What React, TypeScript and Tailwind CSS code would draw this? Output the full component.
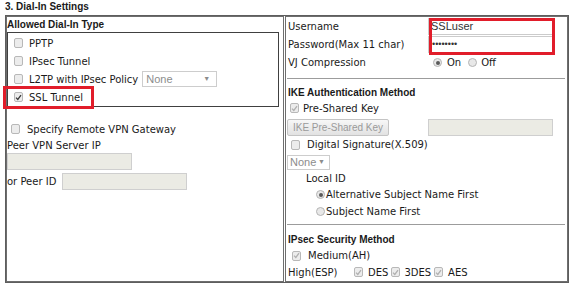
import React from 'react';

const arial = "font-['Liberation_Sans',Arial,sans-serif]";

function Box({ checked = false, dim = false }: { checked?: boolean; dim?: boolean }) {
  return (
    <span className='w-[9px] h-[10px] shrink-0 border border-[#b8b8b8] bg-[#ececec] rounded-[2px] inline-flex items-center justify-center'>
      {checked && (
        <svg width='7' height='7' viewBox='0 0 7 7'>
          <path d='M1 3.6 L2.8 5.4 L6 1.2' fill='none' stroke={dim ? '#b0b0b0' : '#3a3a3a'} strokeWidth='1.3' />
        </svg>
      )}
    </span>
  );
}

function Radio({ on = false }: { on?: boolean }) {
  return (
    <span className='w-[9px] h-[9px] shrink-0 rounded-full border border-[#b4b4b4] bg-[#e8e8e8] inline-flex items-center justify-center'>
      {on && <span className='w-[4px] h-[4px] rounded-full bg-[#5a5a5a]' />}
    </span>
  );
}

export default function App() {
  return (
    <div className="relative w-[573px] h-[286px] bg-white text-[10px] text-[#1a1a1a] font-['DejaVu_Sans',Verdana,sans-serif]">
      <div className={`h-[15px] pl-[5px] leading-[13px] font-bold ${arial}`}>3. Dial-In Settings</div>

      <div className='ml-[5px] w-[564px] h-[268px] border border-[#5e5e5e] flex gap-px'>
        {/* left cell */}
        <div className='w-[278px] border border-[#6e6e6e] flex flex-col'>
          <div className={`h-[15px] leading-[15px] font-bold ${arial}`}>Allowed Dial-In Type</div>
          <div className='mr-[4px] border border-[#404040] pt-px'>
            <div className='h-[18px] flex items-center pl-[6px]'><Box /><span className='ml-[6px]'>PPTP</span></div>
            <div className='h-[18px] flex items-center pl-[6px]'><Box /><span className='ml-[6px]'>IPsec Tunnel</span></div>
            <div className='h-[18px] flex items-center pl-[6px]'>
              <Box /><span className='ml-[6px]'>L2TP with IPsec Policy</span>
              <span className={`ml-[4px] w-[75px] h-[16px] border border-[#cdcdcd] flex items-center justify-between pl-[3px] pr-[6px] text-[11px] text-[#8c8c8c] ${arial}`}>
                None<span className='text-[7px]'>▼</span>
              </span>
            </div>
            <div className='h-[18px] flex items-center pl-[6px]'><Box checked /><span className='ml-[6px]'>SSL Tunnel</span></div>
          </div>

          <div className='mt-[14px] h-[16px] flex items-center pl-[4px]'><Box /><span className='ml-[7px]'>Specify Remote VPN Gateway</span></div>
          <div className='h-[16px] flex items-center'>Peer VPN Server IP</div>
          <div className='w-[125px] h-[17px] border border-[#cfcfcf] bg-[#ebebe4]' />
          <div className='mt-[3px] h-[17px] flex items-center'>
            <span className='w-[55px] shrink-0'>or Peer ID</span>
            <span className='w-[125px] h-[17px] border border-[#cfcfcf] bg-[#ebebe4]' />
          </div>
        </div>

        {/* right cell */}
        <div className='flex-1 border border-[#6e6e6e] flex flex-col'>
          <div className='h-[19px] flex items-center pl-[2px]'>
            <span className='w-[140px] shrink-0'>Username</span>
            <span className={`w-[125px] h-[17px] border border-[#cbcbcb] flex items-center pl-[2px] text-[11px] text-[#333] ${arial}`}>SSLuser</span>
          </div>
          <div className='h-[17px] flex items-center pl-[2px]'>
            <span className='w-[140px] shrink-0'>Password(Max 11 char)</span>
            <span className={`w-[125px] h-[17px] border border-[#cbcbcb] flex items-center pl-[3px] text-[9px] text-[#333] ${arial}`}>••••••••</span>
          </div>
          <div className='h-[19px] flex items-center pl-[2px]'>
            <span className='w-[145px] shrink-0'>VJ Compression</span>
            <Radio on /><span className='ml-[5px]'>On</span>
            <span className='ml-[7px]' /><Radio /><span className='ml-[4px]'>Off</span>
          </div>
          <div className='mt-[6px] h-px ml-px mr-[2px] bg-[#9c9c9c]' />
          <div className={`mt-[5px] h-[16px] flex items-center pl-[2px] font-bold ${arial}`}>IKE Authentication Method</div>
          <div className='h-[16px] flex items-center pl-[4px]'><Box checked dim /><span className='ml-[4px]'>Pre-Shared Key</span></div>
          <div className='mt-[3px] h-[17px] flex pl-px'>
            <span className={`w-[102px] h-[17px] border border-[#c4c4c4] rounded-[2px] bg-gradient-to-b from-[#f7f7f7] to-[#e2e2e2] flex items-center justify-center text-[#9a9a9a] ${arial}`}>IKE Pre-Shared Key</span>
            <span className='ml-[39px] w-[125px] h-[17px] border border-[#cfcfcf] bg-[#ebebe4]' />
          </div>
          <div className='h-[17px] flex items-center pl-[5px]'><Box /><span className='ml-[7px]'>Digital Signature(X.509)</span></div>
          <div className='mt-[2px] h-[15px] pl-px flex'>
            <span className={`w-[43px] h-[15px] border border-[#cdcdcd] flex items-center justify-between pl-[2px] pr-[4px] text-[11px] text-[#8c8c8c] ${arial}`}>
              None<span className='text-[7px]'>▼</span>
            </span>
          </div>
          <div className='h-[16px] flex items-center pl-[20px]'>Local ID</div>
          <div className='h-[17px] flex items-center pl-[30px]'><Radio on /><span className='ml-px'>Alternative Subject Name First</span></div>
          <div className='h-[16px] flex items-center pl-[30px]'><Radio /><span className='ml-px'>Subject Name First</span></div>
          <div className='mt-[5px] h-px ml-px mr-[2px] bg-[#9c9c9c]' />
          <div className={`mt-[6px] h-[16px] flex items-center pl-[2px] font-bold ${arial}`}>IPsec Security Method</div>
          <div className='h-[17px] flex items-center pl-[6px]'><Box checked dim /><span className='ml-[7px]'>Medium(AH)</span></div>
          <div className='h-[16px] flex items-center pl-[2px]'>
            <span className='w-[66px] shrink-0'>High(ESP)</span>
            <Box checked dim /><span className='ml-[5px]'>DES</span>
            <span className='ml-[3px]' /><Box checked dim /><span className='ml-[4px]'>3DES</span>
            <span className='ml-[3px]' /><Box checked dim /><span className='ml-[5px]'>AES</span>
          </div>
        </div>
      </div>

      {/* annotation boxes */}
      <div className='absolute left-[3px] top-[86px] w-[91px] h-[23px] border-[3px] border-[#e11d2a]' />
      <div className='absolute left-[429px] top-[18px] w-[126px] h-[37px] border-[3px] border-[#e11d2a]' />
    </div>
  );
}
